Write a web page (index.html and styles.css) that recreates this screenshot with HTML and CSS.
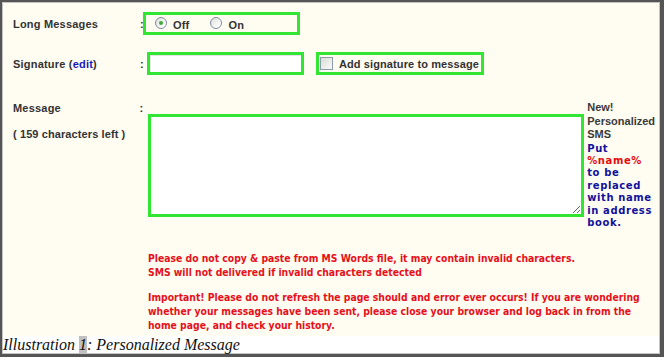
FILE: index.html
```html
<!DOCTYPE html>
<html>
<head>
<meta charset="utf-8">
<link rel="stylesheet" href="styles.css">
</head>
<body>
<div class="frame">
  <div class="inner">
    <div class="panel">
      <div class="row row1">
        <div class="label">Long Messages</div>
        <div class="colon">:</div>
        <div class="gbox radios">
          <span class="radio checked"></span><span class="opt">Off</span>
          <span class="radio"></span><span class="opt">On</span>
        </div>
      </div>
      <div class="row row2">
        <div class="label">Signature (<span class="edit">edit</span>)</div>
        <div class="colon">:</div>
        <div class="gbox sigin"></div>
        <div class="gbox sigchk"><span class="check"></span><span class="opt">Add signature to message</span></div>
      </div>
      <div class="row row3">
        <div class="label">
          <div class="lline">Message</div>
          <div class="lline left">( 159 characters left )</div>
        </div>
        <div class="colon">:</div>
        <textarea class="msg"></textarea>
        <div class="side">
          <div class="gray">New!<br>Personalized<br>SMS</div>
          <div class="blue">Put<br><span class="red">%name%</span><br>to be<br>replaced<br>with name<br>in address<br>book.</div>
        </div>
      </div>
      <div class="notes">
        <p class="note">Please do not copy &amp; paste from MS Words file, it may contain invalid characters.<br>SMS will not delivered if invalid characters detected</p>
        <p class="note n2">Important! Please do not refresh the page should and error ever occurs! If you are wondering<br>whether your messages have been sent, please close your browser and log back in from the<br>home page, and check your history.</p>
      </div>
    </div>
    <div class="caption">Illustration <span class="fld">1</span>: Personalized Message</div>
  </div>
</div>
</body>
</html>
```
FILE: styles.css
```css
html, body { margin: 0; padding: 0; background: #ffffff; }
.frame {
  width: 664px; height: 357px; box-sizing: border-box;
  border-style: solid; border-color: #555555;
  border-width: 2px 4px 3px 2px;
}
.inner {
  height: 100%; box-sizing: border-box;
  border: 1px solid #c4c4c4;
  display: flex; flex-direction: column;
}
.panel {
  height: 333px; background: #fffcf2;
  padding-left: 10px; box-sizing: border-box;
  font-family: "Liberation Sans", Arial, sans-serif;
  font-weight: bold; font-size: 11px; color: #333333;
}
.row { display: flex; align-items: center; }
.row1 { padding-top: 9px; height: 23px; }
.row2 { margin-top: 17px; height: 23px; }
.row3 { margin-top: 26px; align-items: flex-start; }
.label { width: 127px; letter-spacing: 0.2px; white-space: nowrap; }
.edit { color: #1818c0; }
.colon { width: 3px; }
.gbox {
  box-sizing: border-box; height: 23px;
  border: 3px solid #33e533;
  display: flex; align-items: center;
}
.radios { width: 157px; padding-left: 9px; }
.radio {
  width: 12px; height: 12px; box-sizing: border-box; border-radius: 50%;
  border: 1px solid #7d8ea3;
  background: linear-gradient(135deg, #dcdcd6 0%, #ffffff 80%);
  position: relative; margin-top: -2px;
}
.radio.checked::after {
  content: ""; position: absolute; left: 3px; top: 3px;
  width: 4px; height: 4px; border-radius: 50%; background: #3fa83f;
}
.opt { margin-left: 6px; letter-spacing: 0.2px; white-space: nowrap; }
.radios .opt { margin-top: 2px; }
.radios .opt:nth-of-type(2) { margin-right: 21px; }
.sigin { width: 157px; margin-left: 4px; background: #ffffff; box-shadow: inset 1px 1px 0 #e4e4e4; }
.sigchk { width: 168px; margin-left: 12px; padding-left: 1px; }
.sigchk .opt { letter-spacing: 0.1px; }
.check {
  width: 13px; height: 13px; box-sizing: border-box; flex: none;
  border: 1px solid #8a9bb0;
  background: linear-gradient(135deg, #dcdcd4 0%, #f6f6f4 85%);
}
.lline { height: 14px; line-height: 14px; }
.lline.left { margin-top: 12px; letter-spacing: 0.1px; }
.row3 .colon { line-height: 14px; }
.msg {
  width: 438px; height: 103px; box-sizing: border-box;
  margin: 13px 0 0 5px; padding: 0;
  border: 3px solid #33e533; background: #ffffff;
  outline: none; display: block;
}
.side { margin-left: 3px; width: 72px; }
.gray { line-height: 13.5px; color: #3a3a3a; }
.blue {
  font-family: "DejaVu Sans", Verdana, sans-serif; font-size: 10px;
  letter-spacing: 0.6px; line-height: 12.4px; color: #12129a; margin-top: 1px;
  white-space: nowrap;
}
.red { color: #e60d0d; }
.notes {
  margin: 22px 0 0 135px;
  font-family: "DejaVu Sans Condensed", "DejaVu Sans", sans-serif;
  font-stretch: condensed; font-size: 10.3px; color: #e5101a;
}
.note { margin: 0; line-height: 14px; white-space: nowrap; }
.n2 { margin-top: 11px; }
.caption {
  flex: 1; background: #ffffff;
  font-family: "Liberation Serif", "Times New Roman", serif;
  font-style: italic; font-size: 16px; line-height: 17px; color: #111111;
  white-space: nowrap;
}
.fld { background: #c0c0c0; }
```
